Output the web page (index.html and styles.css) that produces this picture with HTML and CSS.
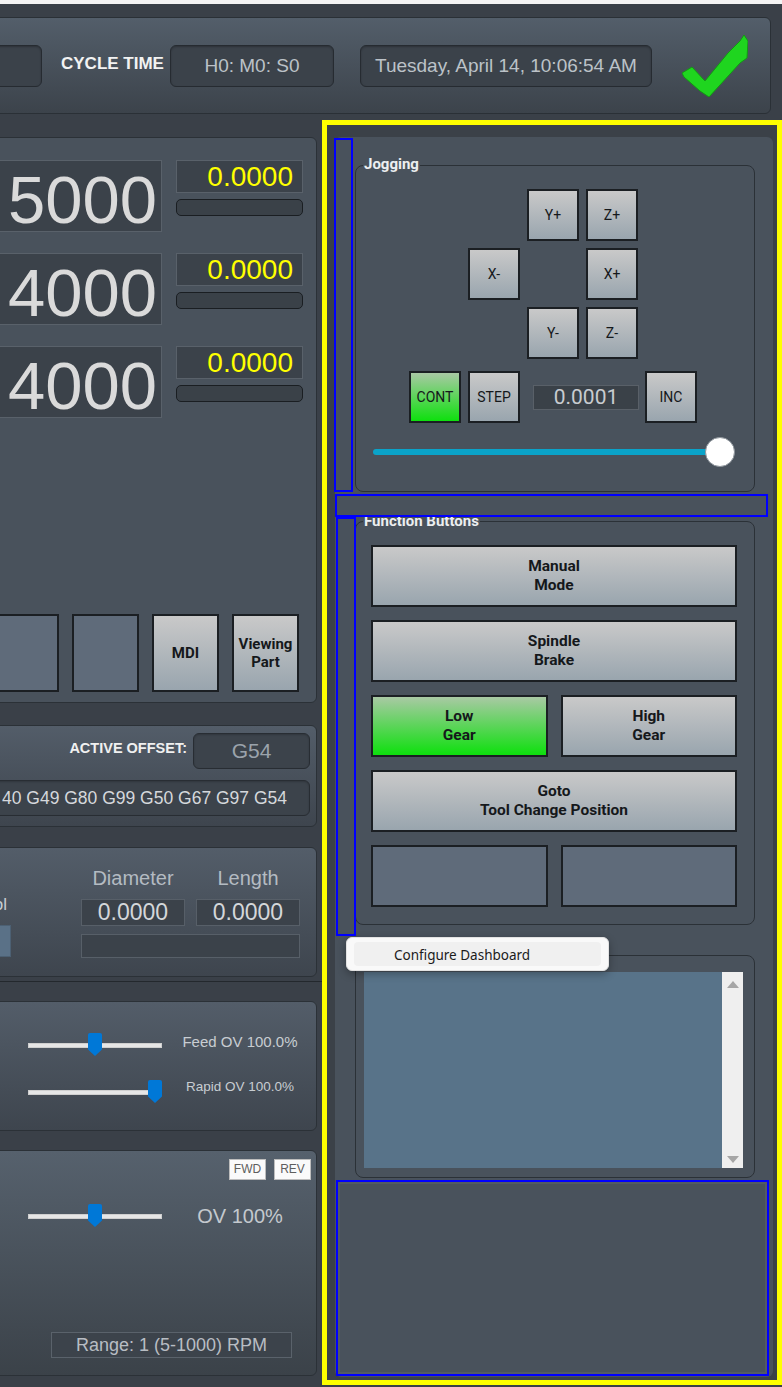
FILE: index.html
```html
<!DOCTYPE html>
<html lang="en">
<head>
    <meta charset="UTF-8">
    <meta name="viewport" content="width=device-width, initial-scale=1.0">
    <title>Machine Dashboard</title>
    <link rel="stylesheet" href="styles.css">
</head>
<body>
<div class="app">
    <div class="topbar">
        <div class="header">
            <div class="hbox hbox-left"></div>
            <span class="hlabel">CYCLE TIME</span>
            <div class="hbox hbox-cycle">H0: M0: S0</div>
            <div class="hbox hbox-date">Tuesday, April 14, 10:06:54 AM</div>
            <svg class="check" viewBox="0 0 66 62">
                <polygon points="0,38 10,32 23,46 46,18 58,6 62,0 66,6 65,23 58,28 27,62 18,56 2,42" fill="#1fd51f" stroke="#139a13" stroke-width="1"/>
            </svg>
        </div>
    </div>

    <div class="main">
        <div class="left-col">
            <!-- DRO -->
            <section class="panel dro-panel">
                <div class="dro-row">
                    <div class="dro-big">5000</div>
                    <div class="dro-side">
                        <div class="dro-small">0.0000</div>
                        <div class="dro-bar"></div>
                    </div>
                </div>
                <div class="dro-row">
                    <div class="dro-big">4000</div>
                    <div class="dro-side">
                        <div class="dro-small">0.0000</div>
                        <div class="dro-bar"></div>
                    </div>
                </div>
                <div class="dro-row">
                    <div class="dro-big">4000</div>
                    <div class="dro-side">
                        <div class="dro-small">0.0000</div>
                        <div class="dro-bar"></div>
                    </div>
                </div>
                <div class="mode-row">
                    <div class="btn btn-empty mode-btn"></div>
                    <div class="btn btn-empty mode-btn"></div>
                    <div class="btn mode-btn">MDI</div>
                    <div class="btn mode-btn">Viewing<br>Part</div>
                </div>
            </section>

            <!-- offsets -->
            <section class="panel offset-panel">
                <div class="offset-row">
                    <span class="offset-label">ACTIVE OFFSET:</span>
                    <div class="dbox offset-box">G54</div>
                </div>
                <div class="dbox gcode-box"><span>40 G49 G80 G99 G50 G67 G97 G54</span></div>
            </section>

            <!-- tool -->
            <section class="panel tool-panel">
                <div class="tool-left">
                    <span class="tool-name">Tool</span>
                    <div class="tool-num"></div>
                </div>
                <div class="tool-grid">
                    <span class="tool-head">Diameter</span>
                    <span class="tool-head">Length</span>
                    <div class="vbox">0.0000</div>
                    <div class="vbox">0.0000</div>
                    <div class="vbox tool-desc"></div>
                </div>
            </section>

            <div class="splitter"></div>

            <!-- feed overrides -->
            <section class="panel feed-panel">
                <div class="ov-row">
                    <div class="slider"><div class="track"></div><div class="thumb" style="left: 60px"></div></div>
                    <span class="ov-label feed-label">Feed OV 100.0%</span>
                </div>
                <div class="ov-row ov-row-2">
                    <div class="slider"><div class="track"></div><div class="thumb" style="left: 120px"></div></div>
                    <span class="ov-label rapid-label">Rapid OV 100.0%</span>
                </div>
            </section>

            <!-- spindle -->
            <section class="panel spindle-panel">
                <div class="dir-row">
                    <div class="dir-btn">FWD</div>
                    <div class="dir-btn">REV</div>
                </div>
                <div class="ov-row spindle-row">
                    <div class="slider"><div class="track"></div><div class="thumb" style="left: 60px"></div></div>
                    <span class="ov-label spindle-label">OV 100%</span>
                </div>
                <div class="range-box">Range: 1 (5-1000) RPM</div>
            </section>
        </div>

        <div class="right-col">
            <div class="dock">
                <div class="group jog-group">
                    <div class="group-title">Jogging</div>
                    <div class="jog-grid">
                        <div class="btn jog-btn" style="grid-area: 1 / 3">Y+</div>
                        <div class="btn jog-btn" style="grid-area: 1 / 4">Z+</div>
                        <div class="btn jog-btn" style="grid-area: 2 / 2">X-</div>
                        <div class="btn jog-btn" style="grid-area: 2 / 4">X+</div>
                        <div class="btn jog-btn" style="grid-area: 3 / 3">Y-</div>
                        <div class="btn jog-btn" style="grid-area: 3 / 4">Z-</div>
                        <div class="btn jog-btn btn-on last-row" style="grid-area: 4 / 1">CONT</div>
                        <div class="btn jog-btn last-row" style="grid-area: 4 / 2">STEP</div>
                        <div class="jog-inc" style="grid-area: 4 / 3 / 5 / 5">0.0001</div>
                        <div class="btn jog-btn last-row" style="grid-area: 4 / 5">INC</div>
                    </div>
                    <div class="jog-slider">
                        <div class="jog-track"></div>
                        <div class="jog-knob"></div>
                    </div>
                </div>

                <div class="group func-group">
                    <div class="group-title func-title">Function Buttons</div>
                    <div class="func-grid">
                        <div class="btn func-btn wide">Manual<br>Mode</div>
                        <div class="btn func-btn wide">Spindle<br>Brake</div>
                        <div class="btn func-btn btn-on">Low<br>Gear</div>
                        <div class="btn func-btn">High<br>Gear</div>
                        <div class="btn func-btn wide">Goto<br>Tool Change Position</div>
                        <div class="btn btn-empty func-btn"></div>
                        <div class="btn btn-empty func-btn"></div>
                    </div>
                </div>

                <div class="group log-group">
                    <div class="log">
                        <div class="log-text"></div>
                        <div class="log-scroll">
                            <div class="arrow-up"></div>
                            <div class="arrow-down"></div>
                        </div>
                    </div>
                </div>

                <div class="ctx-menu">
                    <div class="ctx-item">Configure Dashboard</div>
                </div>
            </div>

            <div class="dbg dbg-1"></div>
            <div class="dbg dbg-2"></div>
            <div class="dbg dbg-3"></div>
            <div class="dbg dbg-4"></div>
        </div>
    </div>
</div>
</body>
</html>
```

FILE: styles.css
```css
* {
    box-sizing: border-box;
}
body {
    margin: 0;
    background: #3a4048;
    font-family: Roboto, "Liberation Sans", Arial, sans-serif;
    overflow: hidden;
}
.app {
    width: 782px;
    height: 1387px;
    overflow: hidden;
    background: #3a4048;
}

/* header */
.topbar {
    height: 120px;
    border-top: 4px solid #f4f4f4;
    padding: 13px 11px 0 0;
}
.header {
    display: flex;
    align-items: center;
    height: 97px;
    margin-left: -10px;
    border: 1px solid #2a3036;
    border-radius: 6px;
    background: linear-gradient(#535e6a, #3c434b);
}
.hbox {
    height: 42px;
    border: 1px solid #262b31;
    border-radius: 6px;
    background: #3b424a;
    box-shadow: inset 0 1px 2px rgba(0,0,0,0.25);
    display: flex;
    align-items: center;
    justify-content: center;
    color: #bcc2c8;
    font: 19px "Liberation Sans", Arial, sans-serif;
}
.hbox-left {
    width: 51px;
}
.hlabel {
    margin: 0 0 3px 19px;
    font: bold 17px "Liberation Sans", Arial, sans-serif;
    color: #f2f2f2;
}
.hbox-cycle {
    width: 164px;
    margin-left: 6px;
}
.hbox-date {
    width: 292px;
    margin-left: 26px;
}
.check {
    margin-left: 30px;
    width: 66px;
    height: 62px;
}

/* layout */
.main {
    display: flex;
    height: 1267px;
}
.left-col {
    width: 322px;
    flex: none;
    display: flex;
    flex-direction: column;
}
.panel {
    flex: none;
    margin-left: -12px;
    width: 329px;
    border: 1px solid #2b3137;
    border-radius: 6px;
    background: linear-gradient(#535d69, #3e454e);
}

/* generic buttons */
.btn {
    display: flex;
    align-items: center;
    justify-content: center;
    text-align: center;
    border: 2px solid #1b1f23;
    background: linear-gradient(#c9c9c9, #99a5ae);
    color: #15181b;
}
.btn-empty {
    background: #5f6b7a;
}
.btn-on {
    background: linear-gradient(#a9c9a4, #0ee00e);
}

/* DRO */
.dro-panel {
    margin-top: 17px;
    height: 566px;
    padding: 22px 0 10px;
    display: flex;
    flex-direction: column;
    background: #49525c;
}
.dro-row {
    display: flex;
    height: 72px;
    margin-bottom: 21px;
}
.dro-big {
    width: 173px;
    height: 72px;
    padding-right: 4px;
    background: #3b424a;
    border: 1px solid #59616a;
    color: #dadada;
    font: 67px/78px "Liberation Sans", Arial, sans-serif;
    text-align: right;
}
.dro-side {
    width: 127px;
    margin-left: 14px;
}
.dro-small {
    height: 33px;
    padding-right: 9px;
    background: #3b424a;
    border: 1px solid #59616a;
    color: #ffff00;
    font: 28px/31px "Liberation Sans", Arial, sans-serif;
    text-align: right;
}
.dro-bar {
    height: 17px;
    margin-top: 6px;
    border: 1px solid #1a1e22;
    border-radius: 5px;
    background: #3a4148;
}
.mode-row {
    margin-top: auto;
    display: flex;
    justify-content: flex-end;
    gap: 13px;
    padding-right: 17px;
}
.mode-btn {
    width: 67px;
    height: 78px;
    flex: none;
    font-weight: bold;
    font-size: 15px;
    line-height: 18px;
}

/* offsets */
.offset-panel {
    margin-top: 22px;
    height: 102px;
    padding: 7px 6px 0 0;
}
.offset-row {
    display: flex;
    justify-content: flex-end;
    align-items: center;
}
.offset-label {
    margin: 0 6px 7px 0;
    font: bold 14.5px "Liberation Sans", Arial, sans-serif;
    color: #f0f0f0;
}
.dbox {
    height: 36px;
    border: 1px solid #282d33;
    border-radius: 6px;
    background: #3c434b;
    box-shadow: inset 0 1px 2px rgba(0,0,0,0.2);
    font-family: "Liberation Sans", Arial, sans-serif;
}
.offset-box {
    width: 117px;
    display: flex;
    align-items: center;
    justify-content: center;
    color: #9ba3ab;
    font-size: 21px;
}
.gcode-box {
    margin-top: 11px;
    display: flex;
    align-items: center;
    justify-content: flex-end;
    white-space: nowrap;
    overflow: hidden;
    padding-right: 22px;
    color: #d5d8dc;
    font-size: 17.5px;
}

/* tool */
.tool-panel {
    margin-top: 20px;
    height: 130px;
    display: flex;
    padding-right: 16px;
}
.tool-left {
    width: 22px;
    display: flex;
    flex-direction: column;
    align-items: flex-end;
}
.tool-name {
    margin-top: 47px;
    padding-right: 4px;
    display: flex;
    justify-content: flex-end;
    white-space: nowrap;
    color: #c8cdd2;
    font: 17px/20px "Liberation Sans", Arial, sans-serif;
}
.tool-num {
    width: 100%;
    height: 32px;
    margin-top: 10px;
    background: #5a7187;
    border: 1px solid #4c6073;
}
.tool-grid {
    margin-left: auto;
    display: grid;
    grid-template-columns: 104px 104px;
    column-gap: 11px;
    align-content: start;
    padding-top: 18px;
}
.tool-head {
    text-align: center;
    color: #b4bbc2;
    font: 20px/24px "Liberation Sans", Arial, sans-serif;
}
.vbox {
    height: 27px;
    margin-top: 9px;
    background: #3b424a;
    border: 1px solid #575f68;
    text-align: center;
    color: #d4d7da;
    font: 23px/25px "Liberation Sans", Arial, sans-serif;
}
.tool-desc {
    grid-column: 1 / 3;
    height: 24px;
    margin-top: 8px;
}
.splitter {
    height: 1px;
    margin-top: 4px;
    background: #23282d;
}

/* overrides */
.feed-panel {
    margin-top: 19px;
    height: 130px;
    padding-top: 31px;
}
.ov-row {
    display: flex;
    align-items: center;
    height: 24px;
}
.ov-row-2 {
    margin-top: 23px;
}
.slider {
    position: relative;
    width: 134px;
    height: 24px;
    margin-left: 39px;
    flex: none;
}
.track {
    margin-top: 10px;
    height: 5px;
    background: #e6e6e6;
    border: 1px solid #cfcfcf;
}
.thumb {
    position: absolute;
    top: 0;
    width: 14px;
    height: 23px;
    background: #0078d7;
    border-radius: 2px 2px 0 0;
    clip-path: polygon(0 0, 100% 0, 100% 72%, 50% 100%, 0 72%);
}
.ov-label {
    width: 136px;
    text-align: center;
    color: #c8cdd2;
    font-family: "Liberation Sans", Arial, sans-serif;
}
.feed-label {
    font-size: 15px;
    margin: 0 0 7px 10px;
}
.rapid-label {
    font-size: 13.5px;
    margin: 0 0 12px 10px;
}

/* spindle */
.spindle-panel {
    margin-top: 19px;
    height: 226px;
    padding: 8px 5px 17px 0;
    display: flex;
    flex-direction: column;
    background: linear-gradient(#56616d, #3b4249);
}
.dir-row {
    display: flex;
    justify-content: flex-end;
    gap: 8px;
}
.dir-btn {
    width: 37px;
    height: 21px;
    background: #fafafa;
    border: 1px solid #bdbdbd;
    color: #5e5e5e;
    font: 12px/19px "Liberation Sans", Arial, sans-serif;
    text-align: center;
}
.spindle-row {
    margin-top: 24px;
}
.spindle-label {
    font-size: 20px;
    color: #c4c9ce;
    margin-left: 10px;
}
.range-box {
    margin: auto 0 0 62px;
    width: 241px;
    height: 26px;
    background: #3c434b;
    border: 1px solid #5a626b;
    color: #b8bdc3;
    font: 18px/24px "Liberation Sans", Arial, sans-serif;
    text-align: center;
}

/* right dock */
.right-col {
    position: relative;
    flex: none;
    width: 460px;
    height: 1265px;
    border: 5px solid #ffff00;
    background: #3b4148;
    padding: 12px 4px 3px 8px;
}
.dock {
    position: relative;
    height: 100%;
    padding: 0 18px 0 20px;
    background: #49525c;
    border-radius: 6px;
    display: flex;
    flex-direction: column;
}
.group {
    flex: none;
    border: 1px solid #2b3137;
    border-radius: 8px;
}
.group-title {
    display: table;
    margin: -11px 0 0 7px;
    padding: 0 1px;
    background: #49525c;
    color: #eceef0;
    font: bold 15px/18px Roboto, sans-serif;
}
.jog-group {
    margin-top: 28px;
    height: 327px;
}
.jog-grid {
    display: grid;
    grid-template-columns: repeat(5, 52px);
    grid-template-rows: 52px 52px 52px 57px;
    gap: 7px;
    margin: 16px 0 0 53px;
}
.jog-btn {
    font-size: 14px;
}
.last-row {
    height: 52px;
    align-self: end;
}
.jog-inc {
    align-self: end;
    width: 106px;
    height: 25px;
    margin: 0 0 13px 6px;
    background: #3a4148;
    border: 1px solid #596068;
    color: #c8ccd0;
    font: 21px/23px Roboto, sans-serif;
    text-align: center;
}
.jog-slider {
    display: flex;
    align-items: center;
    width: 362px;
    height: 30px;
    margin: 14px 0 0 17px;
}
.jog-track {
    flex: 1;
    height: 6px;
    border-radius: 3px;
    background: #0aa3c9;
}
.jog-knob {
    flex: none;
    width: 30px;
    height: 30px;
    margin-left: -15px;
    border-radius: 50%;
    background: #ffffff;
    border: 1px solid #8e959c;
}
.func-group {
    margin-top: 29px;
    height: 404px;
}
.func-title {
    margin-top: -10px;
}
.func-grid {
    display: grid;
    grid-template-columns: 1fr 1fr;
    grid-auto-rows: 62px;
    gap: 13px;
    width: 366px;
    margin: 15px 0 0 15px;
}
.func-btn {
    font-weight: bold;
    font-size: 15.5px;
    line-height: 19px;
}
.wide {
    grid-column: 1 / 3;
}
.log-group {
    margin-top: 30px;
    height: 223px;
}
.log {
    display: flex;
    width: 379px;
    height: 196px;
    margin: 16px 0 0 8px;
}
.log-text {
    flex: 1;
    background: #587389;
}
.log-scroll {
    width: 21px;
    background: #efefef;
    display: flex;
    flex-direction: column;
    justify-content: space-between;
    align-items: center;
    padding: 9px 0 5px;
}
.arrow-up {
    border-left: 6px solid transparent;
    border-right: 6px solid transparent;
    border-bottom: 7px solid #a6a6a6;
}
.arrow-down {
    border-left: 6px solid transparent;
    border-right: 6px solid transparent;
    border-top: 7px solid #a6a6a6;
}

/* context menu */
.ctx-menu {
    position: absolute;
    left: 11px;
    top: 800px;
    width: 263px;
    height: 34px;
    padding: 4px 7px;
    background: #f9f9f9;
    border: 1px solid #e2e2e2;
    border-radius: 6px;
    box-shadow: 0 3px 8px rgba(0,0,0,0.3);
}
.ctx-item {
    height: 100%;
    padding-left: 40px;
    border-radius: 4px;
    background: #f0f0f0;
    color: #1b1b1b;
    font: 13.5px/26px "Noto Sans", sans-serif;
}

/* debug outlines */
.dbg {
    position: absolute;
    border: 2px solid #0000ff;
}
.dbg-1 {
    left: 7px;
    top: 13px;
    width: 19px;
    height: 354px;
}
.dbg-2 {
    left: 8px;
    top: 369px;
    width: 433px;
    height: 23px;
}
.dbg-3 {
    left: 9px;
    top: 392px;
    width: 20px;
    height: 419px;
}
.dbg-4 {
    left: 9px;
    top: 1055px;
    width: 433px;
    height: 196px;
    box-shadow: inset 0 0 0 2px #535b64;
}
```
